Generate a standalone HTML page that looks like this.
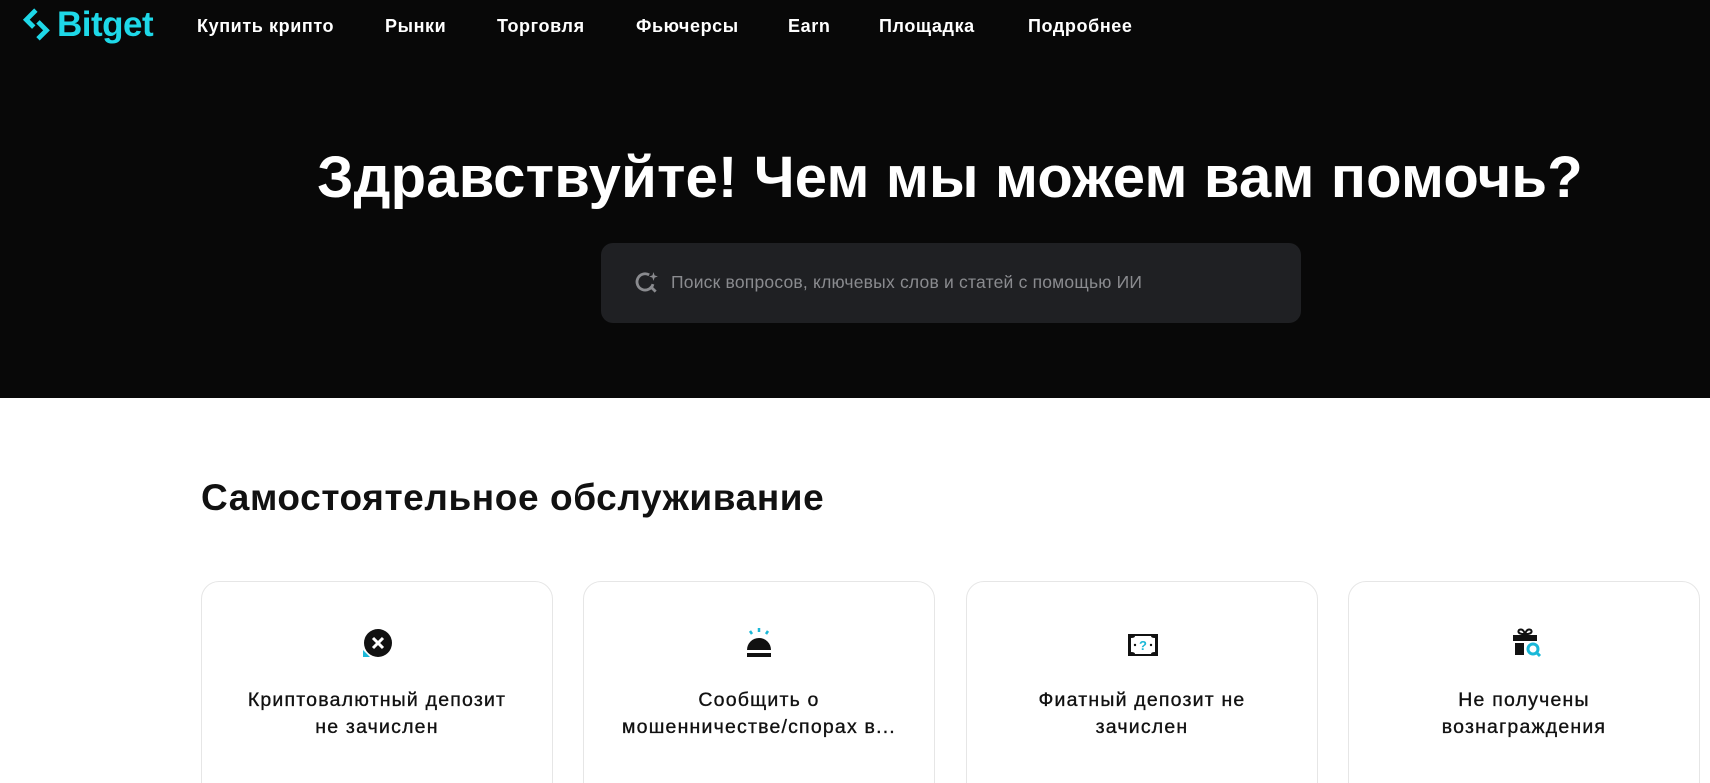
<!DOCTYPE html>
<html><head><meta charset="utf-8"><style>
*{margin:0;padding:0;box-sizing:border-box}
html{height:783px;overflow:hidden}
body{width:1710px;height:783px;overflow:hidden;background:#fff;font-family:"Liberation Sans",Arial,sans-serif;position:relative}
.hero{position:absolute;left:0;top:0;width:1710px;height:398px;background:#080808}
.logo{position:absolute;left:22px;top:5px;display:flex;align-items:center;color:#1ed8e8;font-weight:bold;font-size:35px;letter-spacing:-0.5px}
.nav a{position:absolute;top:16px;color:#fff;font-weight:bold;font-size:18px;letter-spacing:0.6px;text-decoration:none;white-space:nowrap}
h1{position:absolute;left:300px;top:144px;width:1300px;color:#fff;font-size:58px;letter-spacing:0.2px;font-weight:bold;white-space:nowrap;text-align:center}
.search{position:absolute;left:601px;top:243px;width:700px;height:80px;background:#1f2023;border-radius:12px}
.search span{position:absolute;left:70px;top:29px;color:#8a8b8f;font-size:17.5px;letter-spacing:0.2px}
h2{position:absolute;left:201px;top:477px;font-size:37px;letter-spacing:0.6px;font-weight:bold;color:#111}
.card{position:absolute;top:581px;width:352px;height:240px;border:1px solid #e6e6e6;border-radius:18px;text-align:center}
.card p{position:absolute;left:0;right:0;top:105px;font-size:19.5px;letter-spacing:1.2px;line-height:27px;color:#111;-webkit-text-stroke:0.35px #111}
.card svg{position:absolute;left:160px;top:50px}
</style></head><body>
<div class="hero">
<div class="logo"><svg width="32" height="34" viewBox="0 0 30 32"><path d="M13 2 L4 11 L11 18" fill="none" stroke="#1ed8e8" stroke-width="4.5"/><path d="M15 13 L23 21 L15 29" fill="none" stroke="#1ed8e8" stroke-width="4.5"/></svg><span style="margin-left:3px">Bitget</span></div>
<div class="nav">
<a style="left:197px">Купить крипто</a><a style="left:385px">Рынки</a><a style="left:497px">Торговля</a><a style="left:636px">Фьючерсы</a><a style="left:788px">Earn</a><a style="left:879px">Площадка</a><a style="left:1028px">Подробнее</a>
</div>
<h1>Здравствуйте! Чем мы можем вам помочь?</h1>
<div class="search">
<svg style="position:absolute;left:33px;top:27px" width="26" height="26" viewBox="0 0 24 24"><path d="M14 4.5 A7.5 7.5 0 1 0 17.5 13" fill="none" stroke="#8a8b8f" stroke-width="2.6"/><path d="M15 15 L20 20" stroke="#8a8b8f" stroke-width="2.6"/><path d="M18 2 L19 5 L22 6 L19 7 L18 10 L17 7 L14 6 L17 5Z" fill="#8a8b8f"/></svg>
<span>Поиск вопросов, ключевых слов и статей с помощью ИИ</span>
</div>
</div>
<h2>Самостоятельное обслуживание</h2>
<div class="card" style="left:201px"><svg width="34" height="34" viewBox="0 0 34 34" style="left:158px;top:46px"><path d="M3 22 L3 29 L10 29Z" fill="#1ab8d8"/><circle cx="18" cy="15" r="14" fill="#111"/><path d="M13 10 L23 20 M23 10 L13 20" stroke="#fff" stroke-width="3"/></svg><p>Криптовалютный депозит<br>не зачислен</p></div>
<div class="card" style="left:583px"><svg width="34" height="34" viewBox="0 0 34 34" style="left:158px;top:44px"><path d="M17 2 V6 M8 5 L10 8 M26 5 L24 8" stroke="#1ab8d8" stroke-width="2.5"/><path d="M5 24 A12 12 0 0 1 29 24Z" fill="#111"/><rect x="5" y="27" width="24" height="4" fill="#111"/></svg><p>Сообщить о<br>мошенничестве/спорах в...</p></div>
<div class="card" style="left:966px"><svg width="34" height="34" viewBox="0 0 34 34" style="left:159px;top:46px"><rect x="2" y="6" width="30" height="22" fill="#111"/><path d="M5 10 Q9 10 9 8 H25 Q25 10 29 10 V24 Q25 24 25 26 H9 Q9 24 5 24Z" fill="#fff"/><circle cx="9" cy="17" r="1.2" fill="#111"/><circle cx="25" cy="17" r="1.2" fill="#111"/><text x="17" y="22" font-size="13" font-weight="bold" text-anchor="middle" fill="#1ab8d8" font-family="Liberation Sans">?</text></svg><p>Фиатный депозит не<br>зачислен</p></div>
<div class="card" style="left:1348px"><svg width="34" height="34" viewBox="0 0 34 34" style="left:160px;top:44px"><path d="M10 4 Q14 2 16 8 Q18 2 22 4 Q24 7 19 8 H13 Q8 7 10 4Z" fill="none" stroke="#111" stroke-width="2"/><rect x="4" y="9" width="24" height="6" fill="#111"/><rect x="6" y="17" width="9" height="12" fill="#111"/><circle cx="24" cy="23" r="5" fill="none" stroke="#1ab8d8" stroke-width="3"/><path d="M27 26 L31 30" stroke="#1ab8d8" stroke-width="3"/></svg><p>Не получены<br>вознаграждения</p></div>
</body></html>
